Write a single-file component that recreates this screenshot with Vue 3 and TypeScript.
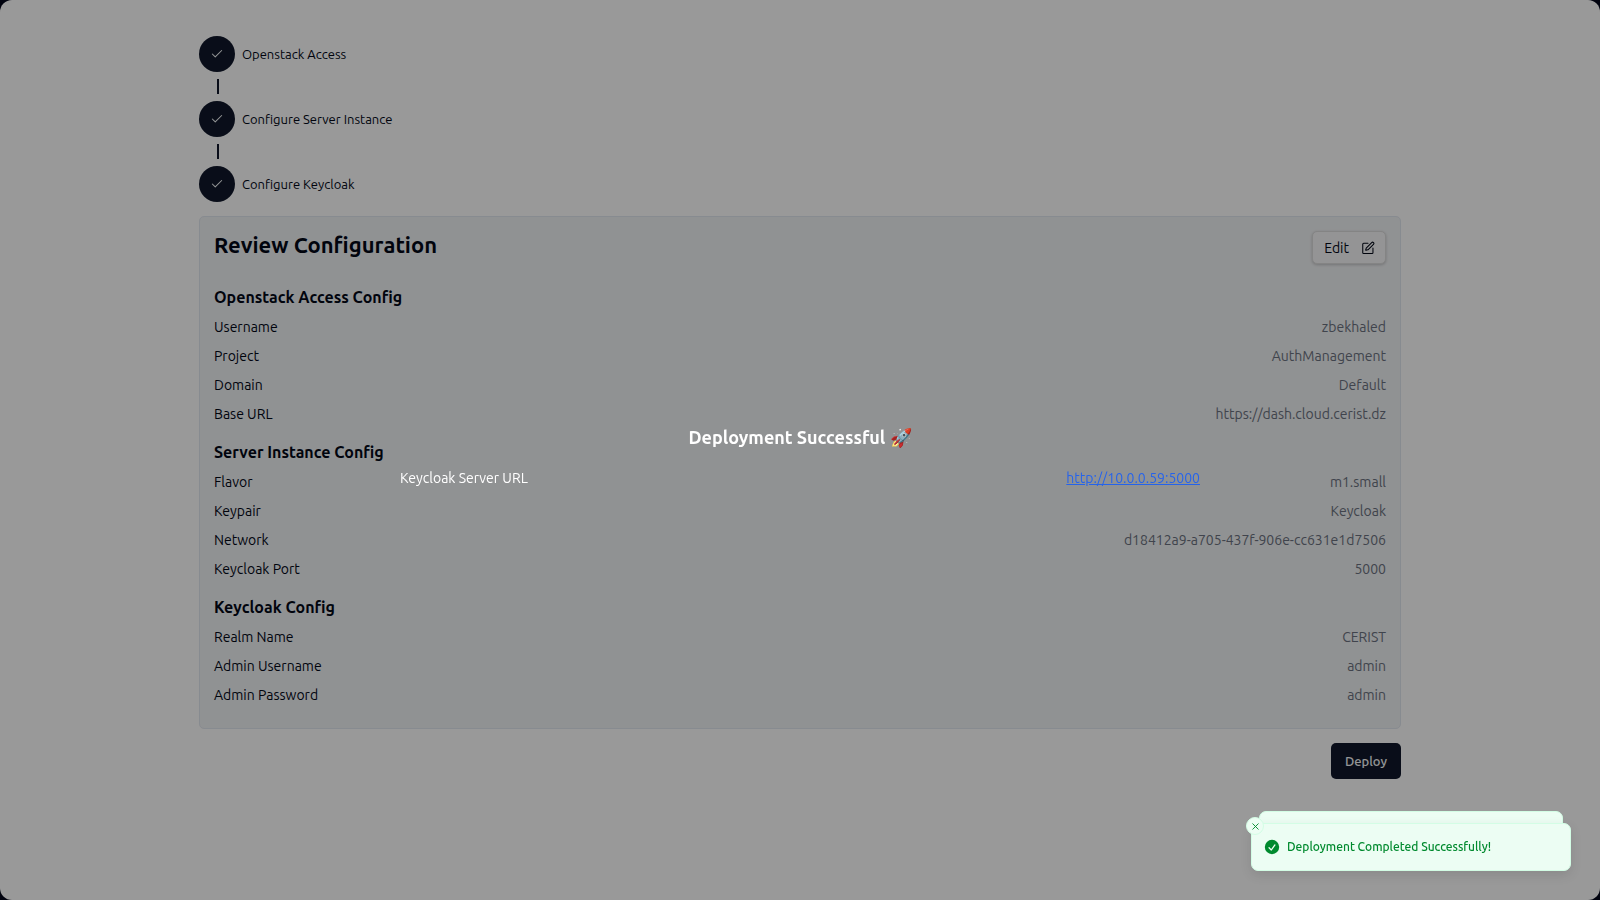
<script setup lang="ts">
interface Entry {
  label: string
  value: string
}

interface Section {
  title: string
  entries: Entry[]
}

const steps: string[] = ['Openstack Access', 'Configure Server Instance', 'Configure Keycloak']

const sections: Section[] = [
  {
    title: 'Openstack Access Config',
    entries: [
      { label: 'Username', value: 'zbekhaled' },
      { label: 'Project', value: 'AuthManagement' },
      { label: 'Domain', value: 'Default' },
      { label: 'Base URL', value: 'https://dash.cloud.cerist.dz' },
    ],
  },
  {
    title: 'Server Instance Config',
    entries: [
      { label: 'Flavor', value: 'm1.small' },
      { label: 'Keypair', value: 'Keycloak' },
      { label: 'Network', value: 'd18412a9-a705-437f-906e-cc631e1d7506' },
      { label: 'Keycloak Port', value: '5000' },
    ],
  },
  {
    title: 'Keycloak Config',
    entries: [
      { label: 'Realm Name', value: 'CERIST' },
      { label: 'Admin Username', value: 'admin' },
      { label: 'Admin Password', value: 'admin' },
    ],
  },
]
</script>

<template>
  <div class="page">
    <main class="content">
      <ol class="steps">
        <li v-for="step in steps" :key="step" class="step">
          <span class="step-badge">
            <svg viewBox="0 0 24 24" width="14" height="14" fill="none" stroke="currentColor" stroke-width="1.8" stroke-linecap="round" stroke-linejoin="round" aria-hidden="true">
              <path d="M20 6 9 17l-5-5" />
            </svg>
          </span>
          <span class="step-label">{{ step }}</span>
        </li>
      </ol>

      <section class="card">
        <header class="card-header">
          <h1>Review Configuration</h1>
          <button type="button" class="edit">
            Edit
            <svg viewBox="0 0 24 24" width="14" height="14" fill="none" stroke="currentColor" stroke-width="1.8" stroke-linecap="round" stroke-linejoin="round" aria-hidden="true">
              <path d="M12 4H4.500a1.500 1.500 0 0 0-1.500 1.500v14.500a1.500 1.500 0 0 0 1.500 1.500h14.500a1.500 1.500 0 0 0 1.500-1.500v-8" />
              <path d="M18.375 2.625a1 1 0 0 1 3 3l-9.013 9.014a2 2 0 0 1-.853.505l-2.873.84a.5.5 0 0 1-.62-.62l.84-2.873a2 2 0 0 1 .506-.852z" />
            </svg>
          </button>
        </header>
        <div class="sections">
          <section v-for="section in sections" :key="section.title" class="group">
            <h2>{{ section.title }}</h2>
            <dl>
              <div v-for="entry in section.entries" :key="entry.label" class="row">
                <dt>{{ entry.label }}</dt>
                <dd>{{ entry.value }}</dd>
              </div>
            </dl>
          </section>
        </div>
      </section>

      <button type="button" class="deploy">Deploy</button>
    </main>
  </div>

  <div class="overlay" role="dialog" aria-labelledby="result-title">
    <h2 id="result-title">Deployment Successful 🚀</h2>
    <p class="result">
      <span>Keycloak Server URL</span>
      <a href="http://10.0.0.59:5000">http://10.0.0.59:5000</a>
    </p>
  </div>

  <div class="toaster" role="status">
    <div class="toast-behind"></div>
    <div class="toast">
      <button type="button" class="toast-close" aria-label="Close toast">
        <svg viewBox="0 0 24 24" width="11" height="11" fill="none" stroke="currentColor" stroke-width="2" stroke-linecap="round" stroke-linejoin="round" aria-hidden="true">
          <path d="M18 6 6 18M6 6l12 12" />
        </svg>
      </button>
      <svg class="toast-icon" viewBox="0 0 20 20" width="18" height="18" fill="currentColor" aria-hidden="true">
        <path fill-rule="evenodd" d="M10 18a8 8 0 100-16 8 8 0 000 16zm3.857-9.809a.75.75 0 00-1.214-.882l-3.483 4.79-1.88-1.88a.75.75 0 10-1.06 1.061l2.5 2.5a.75.75 0 001.137-.089l4-5.5z" clip-rule="evenodd" />
      </svg>
      <span>Deployment Completed Successfully!</span>
    </div>
  </div>
</template>

<style>
body {
  background: #02061a;
}
</style>

<style scoped>
.page,
.overlay,
.toaster {
  font-family: Ubuntu, "Noto Sans", "Open Sans", sans-serif;
}

.page,
.page *,
.overlay,
.overlay *,
.toaster,
.toaster * {
  box-sizing: border-box;
  margin: 0;
}

button {
  font-family: inherit;
}

.page {
  min-height: 100vh;
  padding: 36px 16px;
  background: #fff;
  border-radius: 12px;
  color: #020817;
}

.content {
  display: flex;
  flex-direction: column;
  gap: 14px;
  max-width: 1202px;
  margin: 0 auto;
}

.steps {
  display: flex;
  flex-direction: column;
  gap: 7px;
  padding: 0;
  list-style: none;
}

.step {
  display: grid;
  grid-template-columns: 36px 1fr;
  align-items: center;
  gap: 7px;
}

.step:not(:last-child)::after {
  content: "";
  width: 2px;
  height: 15px;
  margin-left: 18px;
  background: #0f172a;
}

.step-badge {
  display: flex;
  align-items: center;
  justify-content: center;
  height: 36px;
  border-radius: 50%;
  background: #0f172a;
  color: #f8fafc;
}

.step-label {
  font-size: 13px;
  line-height: 18px;
}

.card {
  padding: 14px 14px 22px;
  border: 1px solid #e2e8f0;
  border-radius: 5px;
  background: #f1f3f5;
}

.card-header {
  display: flex;
  align-items: flex-start;
  justify-content: space-between;
  margin-bottom: 21px;
}

.card-header h1 {
  font-size: 22px;
  font-weight: 700;
  line-height: 28px;
}

.edit {
  display: flex;
  align-items: center;
  gap: 12px;
  height: 33px;
  padding: 0 10px 0 11px;
  border: 1px solid #dcdcdc;
  border-radius: 5px;
  background: #f7f7f8;
  box-shadow: 0 1px 3px rgba(0, 0, 0, 0.2);
  color: #020817;
  font-size: 14px;
  line-height: 22px;
}

.sections {
  display: flex;
  flex-direction: column;
  gap: 15px;
}

.group h2 {
  margin-bottom: 7px;
  font-size: 16px;
  font-weight: 700;
  line-height: 24px;
}

dl {
  display: flex;
  flex-direction: column;
  gap: 7px;
}

.row {
  display: flex;
  justify-content: space-between;
  font-size: 14px;
  line-height: 22px;
}

.row dd {
  color: #6b7280;
}

.deploy {
  align-self: flex-end;
  height: 36px;
  padding: 0 14px;
  border: 0;
  border-radius: 5px;
  background: #0f172a;
  color: #f8fafc;
  font-size: 13px;
  font-weight: 500;
}

.overlay {
  position: fixed;
  inset: 0;
  display: flex;
  flex-direction: column;
  align-items: center;
  justify-content: center;
  gap: 17px;
  padding-top: 14px;
  background: rgba(0, 0, 0, 0.4);
  color: #fff;
}

.overlay h2 {
  font-size: 18px;
  font-weight: 700;
  line-height: 25px;
}

.result {
  display: flex;
  justify-content: space-between;
  width: 50%;
  font-size: 14px;
  line-height: 22px;
}

.result a {
  color: #2563eb;
}

.toaster {
  position: fixed;
  right: 29px;
  bottom: 29px;
  width: 320px;
}

.toast-behind {
  height: 30px;
  margin: 0 8px -18px;
  border: 1px solid #d3fde5;
  border-radius: 7px;
  background: #ecfdf3;
}

.toast {
  position: relative;
  display: flex;
  align-items: center;
  gap: 6px;
  height: 48px;
  padding: 0 11px;
  border: 1px solid #d3fde5;
  border-radius: 7px;
  background: #ecfdf3;
  box-shadow: 0 4px 12px rgba(0, 0, 0, 0.1);
  color: #008a2e;
  font-size: 12px;
  font-weight: 500;
  line-height: 18px;
}

.toast-close {
  position: absolute;
  top: -7px;
  left: -6px;
  display: flex;
  align-items: center;
  justify-content: center;
  width: 18px;
  height: 18px;
  padding: 0;
  border: 1px solid #d3fde5;
  border-radius: 50%;
  background: #ecfdf3;
  color: #008a2e;
}
</style>
